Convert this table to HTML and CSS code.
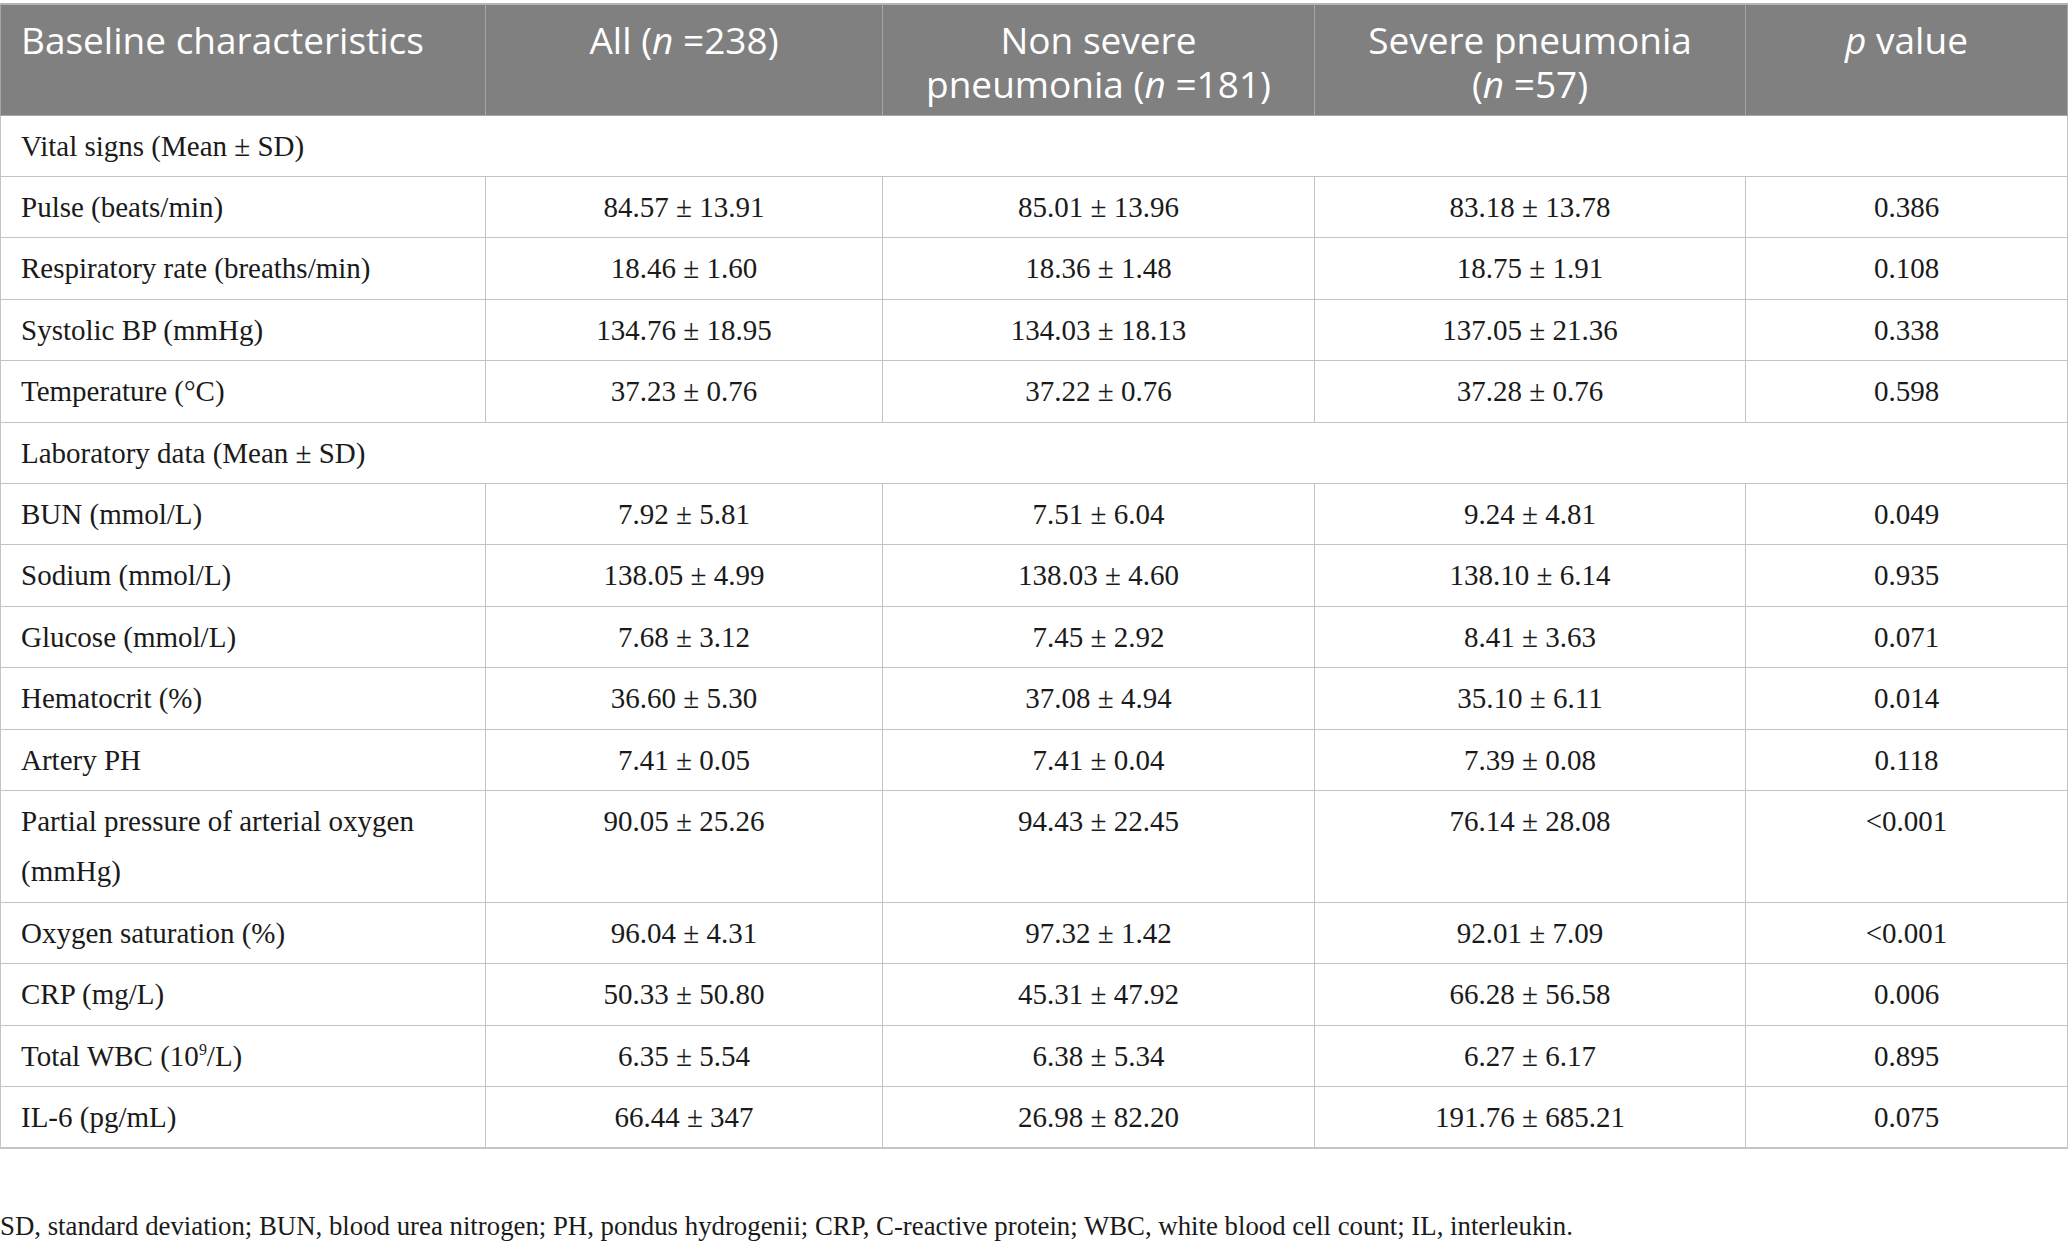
FILE: index.html
```html
<!DOCTYPE html>
<html lang="en">
<head>
    <meta charset="UTF-8">
    <title>Baseline characteristics</title>
    <link rel="stylesheet" href="styles.css">
</head>
<body>
    <table class="data-table">
        <colgroup>
            <col class="col-label">
            <col class="col-all">
            <col class="col-non">
            <col class="col-severe">
            <col class="col-p">
        </colgroup>
        <thead>
            <tr>
                <th class="left">Baseline characteristics</th>
                <th>All (<i>n</i> =238)</th>
                <th>Non severe<br>pneumonia (<i>n</i> =181)</th>
                <th>Severe pneumonia<br>(<i>n</i> =57)</th>
                <th><i>p</i> value</th>
            </tr>
        </thead>
        <tbody>
            <tr class="group-row"><td colspan="5">Vital signs (Mean ± SD)</td></tr>
            <tr><td>Pulse (beats/min)</td><td>84.57 ± 13.91</td><td>85.01 ± 13.96</td><td>83.18 ± 13.78</td><td>0.386</td></tr>
            <tr><td>Respiratory rate (breaths/min)</td><td>18.46 ± 1.60</td><td>18.36 ± 1.48</td><td>18.75 ± 1.91</td><td>0.108</td></tr>
            <tr><td>Systolic BP (mmHg)</td><td>134.76 ± 18.95</td><td>134.03 ± 18.13</td><td>137.05 ± 21.36</td><td>0.338</td></tr>
            <tr><td>Temperature (°C)</td><td>37.23 ± 0.76</td><td>37.22 ± 0.76</td><td>37.28 ± 0.76</td><td>0.598</td></tr>
            <tr class="group-row"><td colspan="5">Laboratory data (Mean ± SD)</td></tr>
            <tr><td>BUN (mmol/L)</td><td>7.92 ± 5.81</td><td>7.51 ± 6.04</td><td>9.24 ± 4.81</td><td>0.049</td></tr>
            <tr><td>Sodium (mmol/L)</td><td>138.05 ± 4.99</td><td>138.03 ± 4.60</td><td>138.10 ± 6.14</td><td>0.935</td></tr>
            <tr><td>Glucose (mmol/L)</td><td>7.68 ± 3.12</td><td>7.45 ± 2.92</td><td>8.41 ± 3.63</td><td>0.071</td></tr>
            <tr><td>Hematocrit (%)</td><td>36.60 ± 5.30</td><td>37.08 ± 4.94</td><td>35.10 ± 6.11</td><td>0.014</td></tr>
            <tr><td>Artery PH</td><td>7.41 ± 0.05</td><td>7.41 ± 0.04</td><td>7.39 ± 0.08</td><td>0.118</td></tr>
            <tr><td>Partial pressure of arterial oxygen (mmHg)</td><td>90.05 ± 25.26</td><td>94.43 ± 22.45</td><td>76.14 ± 28.08</td><td>&lt;0.001</td></tr>
            <tr><td>Oxygen saturation (%)</td><td>96.04 ± 4.31</td><td>97.32 ± 1.42</td><td>92.01 ± 7.09</td><td>&lt;0.001</td></tr>
            <tr><td>CRP (mg/L)</td><td>50.33 ± 50.80</td><td>45.31 ± 47.92</td><td>66.28 ± 56.58</td><td>0.006</td></tr>
            <tr><td>Total WBC (10<sup>9</sup>/L)</td><td>6.35 ± 5.54</td><td>6.38 ± 5.34</td><td>6.27 ± 6.17</td><td>0.895</td></tr>
            <tr><td>IL-6 (pg/mL)</td><td>66.44 ± 347</td><td>26.98 ± 82.20</td><td>191.76 ± 685.21</td><td>0.075</td></tr>
        </tbody>
    </table>
    <p class="footnote">SD, standard deviation; BUN, blood urea nitrogen; PH, pondus hydrogenii; CRP, C-reactive protein; WBC, white blood cell count; IL, interleukin.</p>
</body>
</html>
```

FILE: styles.css
```css
body {
    margin: 0;
    padding: 3px 0 0 0;
    background: #ffffff;
    font-family: "Liberation Serif", "Times New Roman", serif;
    color: #1a1a1a;
}

.data-table {
    width: 2067px;
    border-collapse: collapse;
    table-layout: fixed;
}

.col-label { width: 485px; }
.col-all { width: 397px; }
.col-non { width: 432px; }
.col-severe { width: 431px; }
.col-p { width: 322px; }

/* header */
.data-table th {
    background: #808080;
    color: #ffffff;
    font-family: "Open Sans", "Noto Sans", sans-serif;
    font-weight: 400;
    font-size: 37px;
    line-height: 44px;
    text-align: center;
    vertical-align: top;
    padding: 12.5px 16px 9px 16px;
    border: 1px solid #a6a6a6;
    border-top: 2px solid #b4b4b4;
}

.data-table th.left {
    text-align: left;
    padding-left: 20px;
}

/* body cells */
.data-table td {
    font-size: 29px;
    line-height: 50.4px;
    padding: 5px 20px 5px 20px;
    text-align: center;
    vertical-align: top;
    border: 1.5px solid #c4c4c4;
}

.data-table td:first-child {
    text-align: left;
}

.data-table tbody tr:last-child td {
    border-bottom: 2px solid #c4c4c4;
}

.data-table sup {
    font-size: 0.55em;
    line-height: 0;
}

.footnote {
    margin: 59px 0 0 0;
    font-size: 26.8px;
    line-height: 36px;
}
```
